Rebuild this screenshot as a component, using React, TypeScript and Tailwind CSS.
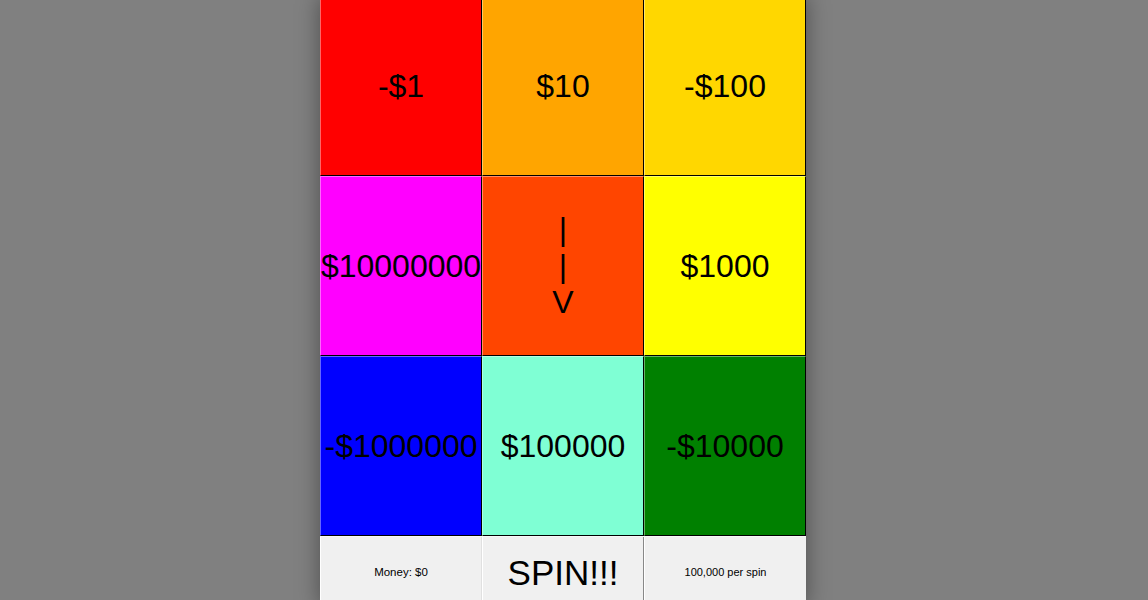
const cells = [
  { label: "-$1", bg: "bg-[#ff0000]" },
  { label: "$10", bg: "bg-[#ffa500]" },
  { label: "-$100", bg: "bg-[#ffd700]" },
  { label: "$10000000", bg: "bg-[#ff00ff]" },
  { label: "|\n|\nV", bg: "bg-[#ff4500]" },
  { label: "$1000", bg: "bg-[#ffff00]" },
  { label: "-$1000000", bg: "bg-[#0000ff]" },
  { label: "$100000", bg: "bg-[#7fffd4]" },
  { label: "-$10000", bg: "bg-[#008000]" },
];

export default function App() {
  return (
    <div className="h-[600px] w-full overflow-hidden bg-[#808080] flex items-start justify-center pr-[22px] font-['Liberation_Sans',Arial,sans-serif] text-black">
      <div className="w-[486px] -mt-[4px] shadow-[0_0_22px_rgba(0,0,0,0.4)] flex flex-col">
        <div className="grid grid-cols-3 auto-rows-[180px] shrink-0">
          {cells.map((c) => (
            <div
              key={c.label}
              className={`${c.bg} flex items-center justify-center text-center whitespace-pre-line text-[32px] leading-[1.15] border-t border-l border-t-white/40 border-l-white/40 border-r border-b border-r-black border-b-black`}
            >
              {c.label}
            </div>
          ))}
        </div>
        <div className="grid grid-cols-3 h-[72px] shrink-0 bg-[#f0f0f0] border-t border-t-[#f8f8f8]">
          <div className="flex items-center justify-center text-[11.5px] border-l border-l-white border-r border-r-[#e0e0e0]">
            Money: $0
          </div>
          <div className="flex items-center justify-center text-[35px] leading-none border-l border-l-white border-r border-r-[#888888]">
            SPIN!!!
          </div>
          <div className="flex items-center justify-center text-[11px] border-l border-l-white">
            100,000 per spin
          </div>
        </div>
      </div>
    </div>
  );
}
